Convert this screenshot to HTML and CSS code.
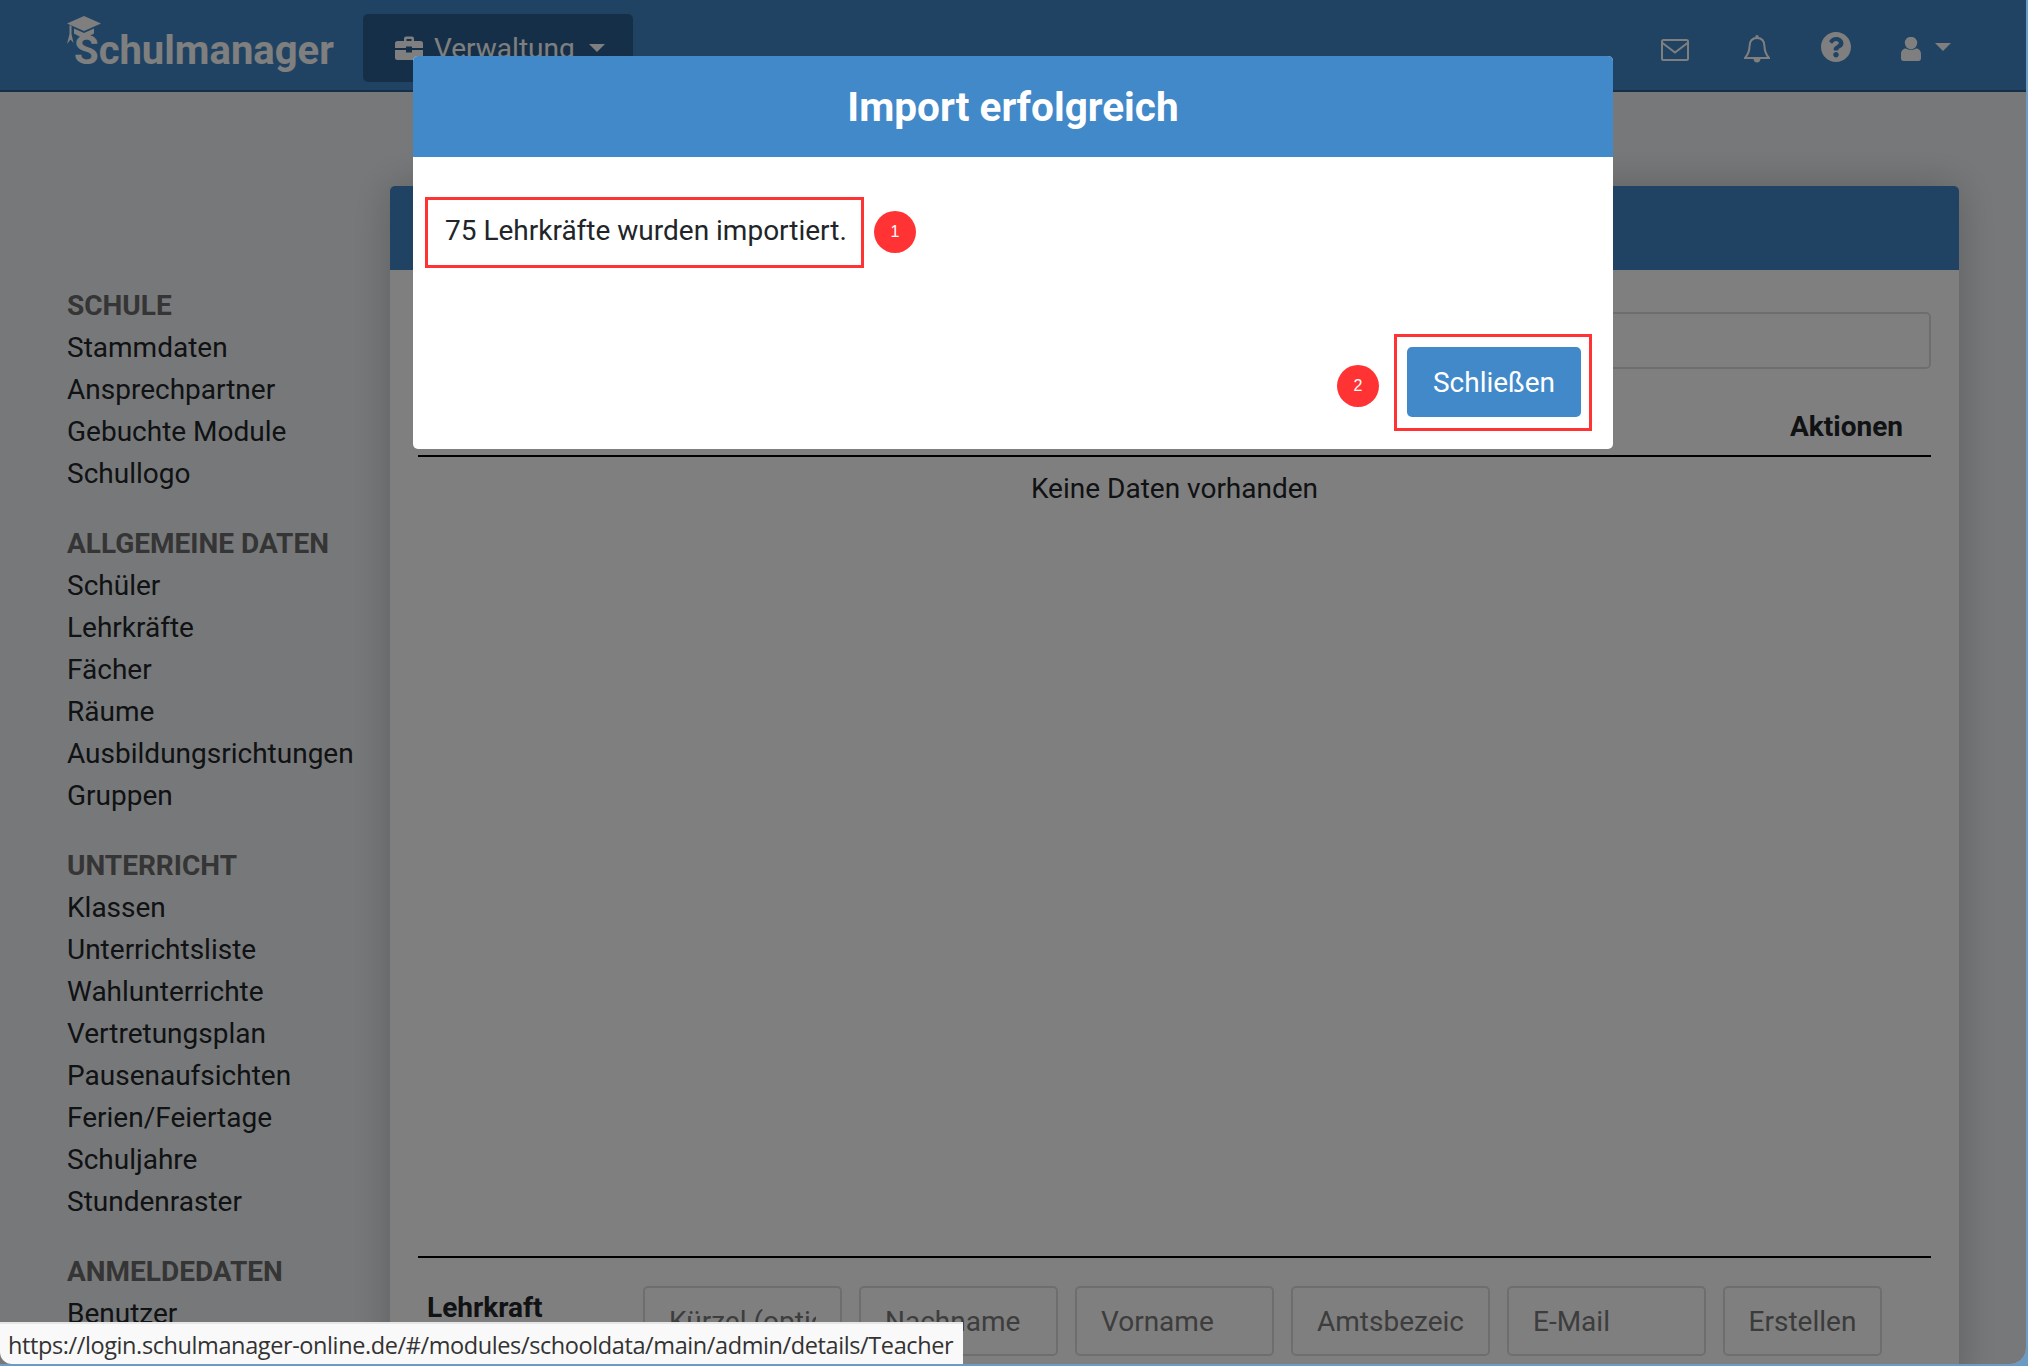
FILE: index.html
```html
<!DOCTYPE html>
<html lang="de">
<head>
<meta charset="utf-8">
<title>Schulmanager</title>
<link rel="stylesheet" href="styles.css">
</head>
<body>
<div class="app">
  <header class="topbar">
    <a class="logo">
      <svg class="logo-cap" viewBox="0 0 34 28">
        <path d="M17 0 34 7.500 17 15 0 7.500Z"/>
        <path d="M7 12.500 17 17 27 12.500V17.500L17 23 7 17.500Z"/>
        <path d="M2.500 9.500H4.500V18L6.500 27 3.500 23.500 0 28 2.500 18Z"/>
      </svg>
      <span class="logo-text">Schulmanager</span>
    </a>
    <button class="menu-btn">
      <svg class="case-icon" viewBox="0 0 28 24">
        <path d="M9 5V2.500Q9 .5 11 .5H17Q19 .5 19 2.500V5H16.500V3H11.500V5Z"/>
        <path d="M2.500 5H25.500Q28 5 28 7.500V12H17V10.500H11V12H0V7.500Q0 5 2.500 5Z"/>
        <path d="M0 14H11V16.500H17V14H28V21.500Q28 24 25.500 24H2.500Q0 24 0 21.500Z"/>
      </svg>
      <span>Verwaltung</span>
      <i class="caret"></i>
    </button>
    <nav class="top-icons">
      <svg class="icon-mail" viewBox="0 0 28 22">
        <rect x="1" y="1" width="26" height="20" rx="1.500"/>
        <path d="M1.500 4 14 13.500 26.500 4"/>
      </svg>
      <svg class="icon-bell" viewBox="0 0 26 28">
        <path d="M13 3C8 3 5.500 6.500 5.500 11.500 5.500 17 3.500 20 1 23H25C22.500 20 20.500 17 20.500 11.500 20.500 6.500 18 3 13 3Z"/>
        <circle class="fill" cx="13" cy="1.700" r="1.700"/>
        <path class="fill" d="M9.500 24H16.500C16 28.800 10 28.800 9.500 24Z"/>
      </svg>
      <svg class="icon-help" viewBox="8 8 496 496">
        <path d="M504 256c0 136.997-111.043 248-248 248S8 392.997 8 256C8 119.083 119.043 8 256 8s248 111.083 248 248zM262.655 90c-54.497 0-89.255 22.957-116.549 63.758-3.536 5.286-2.353 12.415 2.715 16.258l34.699 26.310c5.205 3.947 12.621 3.008 16.665-2.122 17.864-22.658 30.113-35.797 57.303-35.797 20.429 0 45.698 13.148 45.698 32.958 0 14.976-12.363 22.667-32.534 33.976C247.128 238.528 216 254.941 216 296v4c0 6.627 5.373 12 12 12h56c6.627 0 12-5.373 12-12v-1.333c0-28.462 83.186-29.647 83.186-106.667 0-58.002-60.165-102-116.531-102zM256 338c-25.365 0-46 20.635-46 46 0 25.364 20.635 46 46 46s46-20.636 46-46c0-25.365-20.635-46-46-46z"/>
      </svg>
      <span class="user-menu">
        <svg class="icon-user" viewBox="0 0 20 24">
          <circle cx="10" cy="6" r="6.200"/>
          <path d="M0 21V17C0 13.500 2.500 11.500 5 11.500 7 13.300 13 13.300 15 11.500 17.500 11.500 20 13.500 20 17V21Q20 24 17.500 24H2.500Q0 24 0 21Z"/>
        </svg>
        <i class="caret"></i>
      </span>
    </nav>
  </header>

  <div class="main">
    <aside class="sidebar">
      <section class="nav-group">
        <h3>SCHULE</h3>
        <a>Stammdaten</a>
        <a>Ansprechpartner</a>
        <a>Gebuchte Module</a>
        <a>Schullogo</a>
      </section>
      <section class="nav-group">
        <h3>ALLGEMEINE DATEN</h3>
        <a>Schüler</a>
        <a>Lehrkräfte</a>
        <a>Fächer</a>
        <a>Räume</a>
        <a>Ausbildungsrichtungen</a>
        <a>Gruppen</a>
      </section>
      <section class="nav-group">
        <h3>UNTERRICHT</h3>
        <a>Klassen</a>
        <a>Unterrichtsliste</a>
        <a>Wahlunterrichte</a>
        <a>Vertretungsplan</a>
        <a>Pausenaufsichten</a>
        <a>Ferien/Feiertage</a>
        <a>Schuljahre</a>
        <a>Stundenraster</a>
      </section>
      <section class="nav-group">
        <h3>ANMELDEDATEN</h3>
        <a>Benutzer</a>
      </section>
    </aside>

    <section class="panel">
      <div class="panel-head"></div>
      <div class="panel-body">
        <div class="search-box"></div>
        <div class="table-head">Aktionen</div>
        <div class="table-rows">Keine Daten vorhanden</div>
        <form class="add-row">
          <strong class="add-label">Lehrkraft</strong>
          <input class="field" placeholder="Kürzel (optional)">
          <input class="field" placeholder="Nachname">
          <input class="field" placeholder="Vorname">
          <input class="field" placeholder="Amtsbezeichnung">
          <input class="field" placeholder="E-Mail">
          <button class="create-btn" type="button">Erstellen</button>
        </form>
      </div>
    </section>
  </div>

  <div class="backdrop"></div>

  <div class="modal">
    <h2 class="modal-title">Import erfolgreich</h2>
    <div class="modal-body">
      <p>75 Lehrkräfte wurden importiert.</p>
    </div>
    <div class="modal-foot">
      <button class="close-btn" type="button">Schließen</button>
    </div>
    <span class="mark mark-text"></span>
    <span class="badge badge-text">1</span>
    <span class="mark mark-button"></span>
    <span class="badge badge-button">2</span>
  </div>

  <div class="link-preview">https://login.schulmanager-online.de/#/modules/schooldata/main/admin/details/Teacher</div>
</div>
</body>
</html>
```

FILE: styles.css
```css
* {
  box-sizing: border-box;
}

html,
body {
  margin: 0;
  height: 100%;
  background: #6b9ac4;
}

body {
  font-family: Roboto, "Liberation Sans", sans-serif;
  font-size: 28px;
  color: #212529;
  overflow: hidden;
}

.app {
  position: relative;
  width: 2026px;
  height: 1364px;
  background: #eff1f3;
  border-bottom-right-radius: 16px;
  overflow: hidden;
}

/* top bar */
.topbar {
  display: flex;
  align-items: center;
  height: 92px;
  padding: 6px 0 0 67px;
  background: #4086c6;
  border-bottom: 2px solid #2a5f91;
  color: #fff;
}

.logo {
  position: relative;
  width: 296px;
  height: 84px;
  flex: none;
}

.logo-cap {
  position: absolute;
  left: 0;
  top: 10px;
  width: 34px;
  height: 28px;
  fill: #fff;
}

.logo-text {
  position: absolute;
  left: 7px;
  top: 22px;
  font-size: 40px;
  line-height: 46px;
  font-weight: 700;
}

.menu-btn {
  display: flex;
  align-items: center;
  width: 270px;
  height: 68px;
  padding: 0 0 0 32px;
  border: 0;
  border-radius: 5px;
  background: #2a5f91;
  color: #fff;
  font: 400 28px Roboto, sans-serif;
}

.case-icon {
  width: 28px;
  height: 24px;
  fill: #fff;
  margin: 0 11px 0 0;
}

.caret {
  display: block;
  width: 0;
  height: 0;
  margin-left: 14px;
  border: 8px solid transparent;
  border-top-color: #fff;
  border-bottom: 0;
}

.top-icons {
  display: flex;
  align-items: center;
  margin-left: auto;
  color: #fff;
}

.top-icons svg {
  display: block;
  flex: none;
}

.icon-mail {
  width: 28px;
  height: 22px;
  margin: 4px 55px 0 0;
  fill: none;
  stroke: #fff;
  stroke-width: 2;
}

.icon-bell {
  width: 26px;
  height: 28px;
  margin: 2px 51px 0 0;
  fill: none;
  stroke: #fff;
  stroke-width: 2;
}

.icon-bell .fill {
  fill: #fff;
  stroke: none;
}

.icon-help {
  width: 30px;
  height: 30px;
  margin: 0 50px 2px 0;
  fill: #fff;
}

.user-menu {
  display: flex;
  align-items: center;
  margin: 2px 75px 0 0;
}

.icon-user {
  width: 20px;
  height: 24px;
  fill: #fff;
}

.user-menu .caret {
  margin-top: -4px;
  margin-left: 14px;
}

/* page body */
.main {
  display: flex;
  align-items: flex-start;
  height: 1272px;
}

.sidebar {
  width: 390px;
  flex: none;
  padding: 193px 0 0 67px;
}

.nav-group {
  margin-bottom: 28px;
}

.nav-group h3 {
  margin: 0;
  font-size: 28px;
  line-height: 42px;
  font-weight: 700;
  color: #6a6a6a;
}

.nav-group a {
  display: block;
  line-height: 42px;
  color: #212529;
  white-space: nowrap;
}

.panel {
  width: 1569px;
  margin-top: 94px;
  border-radius: 5px 5px 0 0;
  background: #fff;
  box-shadow: 0 0 40px rgba(0, 0, 0, 0.22);
}

.panel-head {
  height: 84px;
  border-radius: 5px 5px 0 0;
  background: #4086c6;
}

.panel-body {
  padding: 42px 28px 40px;
}

.search-box {
  height: 57px;
  border: 2px solid #ddd;
  border-radius: 5px;
}

.table-head {
  height: 88px;
  padding: 39px 28px 0 0;
  border-bottom: 2px solid #000;
  text-align: right;
  font-weight: 700;
  line-height: 38px;
}

.table-rows {
  height: 801px;
  padding-top: 14px;
  border-bottom: 2px solid #000;
  text-align: center;
  line-height: 36px;
}

.add-row {
  display: flex;
  align-items: flex-start;
  gap: 17px;
  padding-top: 28px;
}

.add-label {
  width: 208px;
  padding: 7px 0 0 9px;
  line-height: 30px;
  flex: none;
  font-weight: 700;
}

.field,
.create-btn {
  height: 70px;
  border: 2px solid #ddd;
  border-radius: 5px;
  background: none;
  color: #777;
  font: 400 28px Roboto, sans-serif;
}

.field {
  width: 199px;
  padding: 0 24px;
}

.field::placeholder {
  color: #7a7a7a;
  opacity: 1;
}

.create-btn {
  width: 159px;
  padding: 0;
}

/* dimming layer and dialog */
.backdrop {
  position: absolute;
  inset: 0;
  background: rgba(0, 0, 0, 0.5);
}

.modal {
  position: absolute;
  left: 413px;
  top: 56px;
  display: flex;
  flex-direction: column;
  width: 1200px;
  height: 393px;
  border-radius: 5px;
  background: #fff;
}

.modal-title {
  margin: 0;
  height: 101px;
  border-radius: 5px 5px 0 0;
  background: #4189c9;
  color: #fff;
  font-size: 40.500px;
  line-height: 103px;
  font-weight: 700;
  text-align: center;
}

.modal-body {
  flex: 1;
  padding: 54px 32px 0;
}

.modal-body p {
  margin: 0;
  line-height: 40px;
}

.modal-foot {
  display: flex;
  justify-content: flex-end;
  padding: 0 32px 32px 0;
}

.close-btn {
  width: 174px;
  height: 70px;
  border: 0;
  border-radius: 5px;
  background: #4189c9;
  color: #fff;
  font: 400 28px Roboto, sans-serif;
}

.mark {
  position: absolute;
  border: 3px solid #ff3333;
}

.mark-text {
  left: 12px;
  top: 141px;
  width: 439px;
  height: 71px;
}

.mark-button {
  left: 981px;
  top: 278px;
  width: 198px;
  height: 97px;
}

.badge {
  position: absolute;
  display: flex;
  align-items: center;
  justify-content: center;
  width: 42px;
  height: 42px;
  border-radius: 50%;
  background: #ff3333;
  color: #fff;
  font: 400 16px "Liberation Sans", sans-serif;
}

.badge-text {
  left: 461px;
  top: 155px;
}

.badge-button {
  left: 924px;
  top: 309px;
}

/* hovered link address */
.link-preview {
  position: absolute;
  left: 0;
  bottom: 0;
  width: 963px;
  height: 42px;
  padding-left: 8px;
  border-top: 2px solid #e6e6e6;
  border-bottom-left-radius: 12px;
  background: #f9f9f9;
  color: #333;
  font: 400 23.500px/43px "Open Sans", sans-serif;
  letter-spacing: -0.4px;
  white-space: nowrap;
}
```
